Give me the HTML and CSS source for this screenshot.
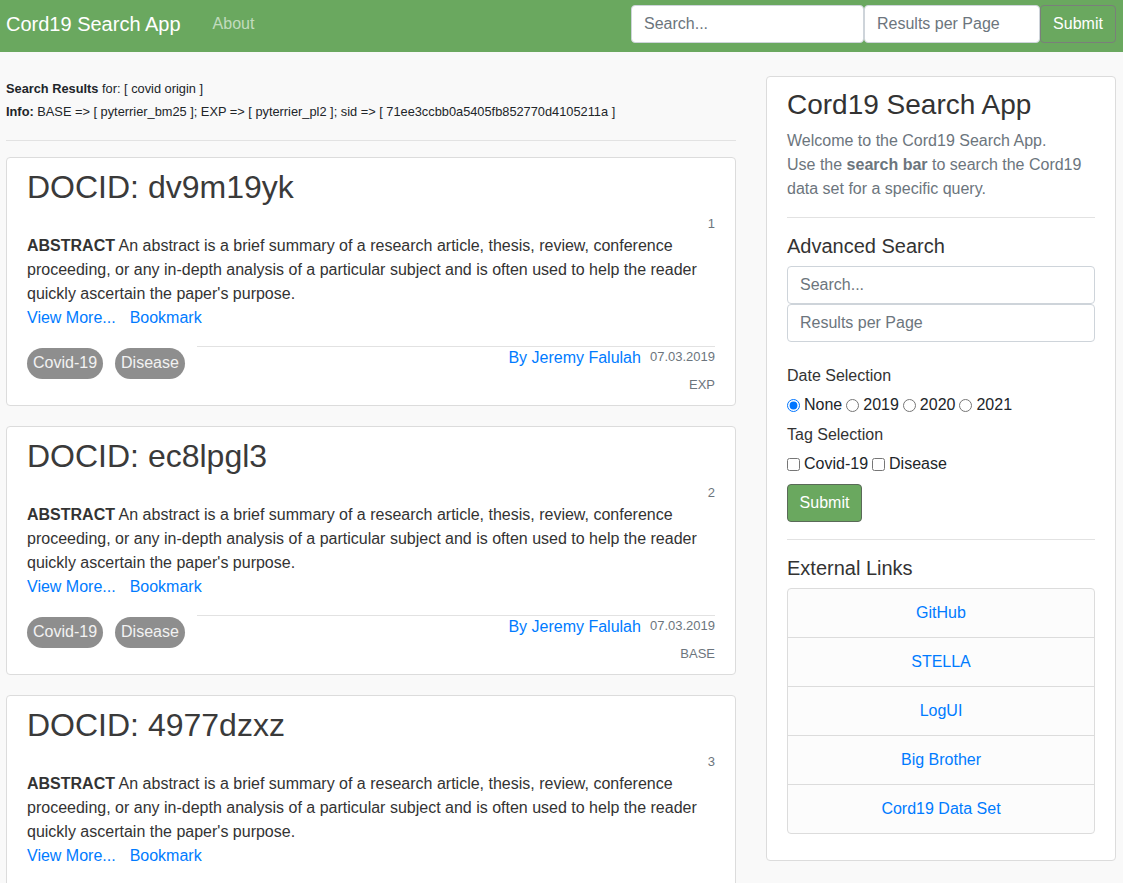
FILE: index.html
```html
<!DOCTYPE html>
<html lang="en">
<head>
<meta charset="utf-8">
<title>Cord19 Search App</title>
<link rel="stylesheet" href="styles.css">
</head>
<body>
<nav class="navbar">
  <a class="brand" href="#">Cord19 Search App</a>
  <a class="nav-link" href="#">About</a>
  <form class="nav-form">
    <input class="nav-input nav-search" type="text" placeholder="Search...">
    <input class="nav-input nav-rpp" type="text" placeholder="Results per Page">
    <button class="nav-btn" type="button">Submit</button>
  </form>
</nav>
<div class="main">
  <div class="results">
    <div class="info">
      <p><b>Search Results</b> for: [ covid origin ]</p>
      <p><b>Info:</b> BASE =&gt; [ pyterrier_bm25 ]; EXP =&gt; [ pyterrier_pl2 ]; sid =&gt; [ 71ee3ccbb0a5405fb852770d4105211a ]</p>
    </div>
    <hr class="sep">
    <div class="card doc">
      <h2 class="doc-title">DOCID: dv9m19yk</h2>
      <div class="rank">1</div>
      <p class="abstract"><b>ABSTRACT</b> An abstract is a brief summary of a research article, thesis, review, conference proceeding, or any in-depth analysis of a particular subject and is often used to help the reader quickly ascertain the paper's purpose.</p>
      <div class="doc-links"><a href="#">View More...</a><a href="#">Bookmark</a></div>
      <div class="doc-foot">
        <div class="tags"><span class="tag">Covid-19</span><span class="tag">Disease</span></div>
        <div class="meta">
          <div class="meta-line"><a href="#" class="author">By Jeremy Falulah</a><span class="date">07.03.2019</span></div>
          <div class="sys">EXP</div>
        </div>
      </div>
    </div>
    <div class="card doc">
      <h2 class="doc-title">DOCID: ec8lpgl3</h2>
      <div class="rank">2</div>
      <p class="abstract"><b>ABSTRACT</b> An abstract is a brief summary of a research article, thesis, review, conference proceeding, or any in-depth analysis of a particular subject and is often used to help the reader quickly ascertain the paper's purpose.</p>
      <div class="doc-links"><a href="#">View More...</a><a href="#">Bookmark</a></div>
      <div class="doc-foot">
        <div class="tags"><span class="tag">Covid-19</span><span class="tag">Disease</span></div>
        <div class="meta">
          <div class="meta-line"><a href="#" class="author">By Jeremy Falulah</a><span class="date">07.03.2019</span></div>
          <div class="sys">BASE</div>
        </div>
      </div>
    </div>
    <div class="card doc">
      <h2 class="doc-title">DOCID: 4977dzxz</h2>
      <div class="rank">3</div>
      <p class="abstract"><b>ABSTRACT</b> An abstract is a brief summary of a research article, thesis, review, conference proceeding, or any in-depth analysis of a particular subject and is often used to help the reader quickly ascertain the paper's purpose.</p>
      <div class="doc-links"><a href="#">View More...</a><a href="#">Bookmark</a></div>
      <div class="doc-foot">
        <div class="tags"><span class="tag">Covid-19</span><span class="tag">Disease</span></div>
        <div class="meta">
          <div class="meta-line"><a href="#" class="author">By Jeremy Falulah</a><span class="date">07.03.2019</span></div>
          <div class="sys">EXP</div>
        </div>
      </div>
    </div>
  </div>
  <aside class="card side">
    <h3 class="side-title">Cord19 Search App</h3>
    <p class="welcome">Welcome to the Cord19 Search App.<br>Use the <b>search bar</b> to search the Cord19 data set for a specific query.</p>
    <hr class="side-hr top">
    <h4 class="side-h">Advanced Search</h4>
    <input class="side-input" type="text" placeholder="Search...">
    <input class="side-input" type="text" placeholder="Results per Page">
    <div class="field-label first">Date Selection</div>
    <div class="choices">
      <label class="choice"><input type="radio" name="date" checked>None</label>
      <label class="choice"><input type="radio" name="date">2019</label>
      <label class="choice"><input type="radio" name="date">2020</label>
      <label class="choice"><input type="radio" name="date">2021</label>
    </div>
    <div class="field-label">Tag Selection</div>
    <div class="choices">
      <label class="choice"><input type="checkbox">Covid-19</label>
      <label class="choice"><input type="checkbox">Disease</label>
    </div>
    <button class="side-btn" type="button">Submit</button>
    <hr class="side-hr">
    <h4 class="side-h">External Links</h4>
    <ul class="list">
      <li><a href="#">GitHub</a></li>
      <li><a href="#">STELLA</a></li>
      <li><a href="#">LogUI</a></li>
      <li><a href="#">Big Brother</a></li>
      <li><a href="#">Cord19 Data Set</a></li>
    </ul>
  </aside>
</div>
</body>
</html>
```
FILE: styles.css
```css
* { box-sizing: border-box; }
html, body { margin: 0; padding: 0; }
body {
  font-family: "Liberation Sans", Arial, sans-serif;
  font-size: 16px;
  line-height: 24px;
  color: #333;
  background: #f9f9f9;
  height: 883px;
  overflow: hidden;
}
a { color: #007bff; text-decoration: none; }

.navbar {
  display: flex;
  align-items: center;
  height: 52px;
  padding: 5px 7px 9px 6px;
  background: #6aa85f;
}
.brand { color: #fff; font-size: 20px; line-height: 30px; }
.nav-link { color: rgba(255,255,255,.6); margin-left: 32px; line-height: 24px; }
.nav-form { display: flex; margin-left: auto; }
.nav-input {
  height: 38px;
  border: 1px solid #ced4da;
  border-radius: 4px;
  padding: 6px 12px;
  font: inherit;
  color: #495057;
  background: #fff;
}
.nav-input::placeholder, .side-input::placeholder { color: #6c757d; }
.nav-search { width: 233px; }
.nav-rpp { width: 176px; }
.nav-btn {
  width: 76px;
  height: 38px;
  border: 1px solid #7a7f7a;
  border-radius: 4px;
  background: #6aa85f;
  color: #fff;
  font: inherit;
  padding: 0;
}

.main {
  display: flex;
  gap: 30px;
  padding: 0 7px 0 6px;
}
.results { width: 730px; }
.info { padding-top: 25px; font-size: 12.8px; line-height: 23px; color: #212529; }
.info p { margin: 0; }
.sep { border: 0; border-top: 1px solid #e2e2e2; margin: 17px 0 16px; }

.card {
  background: #fff;
  border: 1px solid #dcdcdc;
  border-radius: 4px;
}
.doc { padding: 10px 20px 10px; margin-bottom: 20px; }
.doc-title { margin: 0 0 8px; font-size: 32px; line-height: 38px; font-weight: 400; color: #3a3a3a; }
.rank { text-align: right; font-size: 13px; line-height: 20px; color: #6c757d; }
.abstract { margin: 0; }
.doc-links a { margin-right: 14px; }
.doc-foot { display: flex; margin-top: 16px; }
.tags { display: flex; gap: 12px; padding-top: 2px; }
.tag {
  background: #8e8e8e;
  color: #f2f2f2;
  border-radius: 16px;
  padding: 3px 6px 4px;
  line-height: 24px;
  height: 31px;
}
.meta { flex: 1; margin-left: 12px; border-top: 1px solid #e2e2e2; text-align: right; }
.meta-line { height: 22px; line-height: 22px; }
.date { font-size: 13px; line-height: 13px; color: #6c757d; margin-left: 9px; vertical-align: 2px; }
.sys { font-size: 13px; line-height: 20px; margin-top: 6px; color: #6c757d; }

.side { width: 350px; margin-top: 24px; padding: 11px 20px 26px; align-self: flex-start; }
.side-title { margin: 0 0 7px; font-size: 28px; line-height: 34px; font-weight: 400; color: #333; }
.welcome { margin: 0; color: #6c757d; }
.welcome b { color: #6c757d; }
.side-hr { border: 0; border-top: 1px solid #e2e2e2; margin: 17px 0 16px; }
.side-hr.top { margin-top: 16px; }
.side-h { margin: 0 0 8px; font-size: 20px; line-height: 24px; font-weight: 400; color: #333; }
.side-input {
  display: block;
  width: 100%;
  height: 38px;
  border: 1px solid #ced4da;
  border-radius: 4px;
  padding: 6px 12px;
  font: inherit;
  background: #fff;
}
.field-label { color: #333; margin-top: 6px; }
.field-label.first { margin-top: 22px; }
.choices { display: flex; gap: 4px; margin-top: 5px; color: #212529; }
.choice { display: flex; align-items: center; }
.choice input { margin: 0 4px 0 0; width: 13px; height: 13px; }
.side-btn {
  display: block;
  margin-top: 8px;
  width: 75px;
  height: 38px;
  border: 1px solid #5a6a58;
  border-radius: 4px;
  background: #6aa85f;
  color: #fff;
  font: inherit;
  padding: 0;
}
.list {
  list-style: none;
  margin: 6px 0 0;
  padding: 0;
  border: 1px solid #dcdcdc;
  border-radius: 4px;
  background: #fcfcfc;
}
.list li { text-align: center; padding: 12px; border-top: 1px solid #dcdcdc; }
.list li:first-child { border-top: 0; }
```
